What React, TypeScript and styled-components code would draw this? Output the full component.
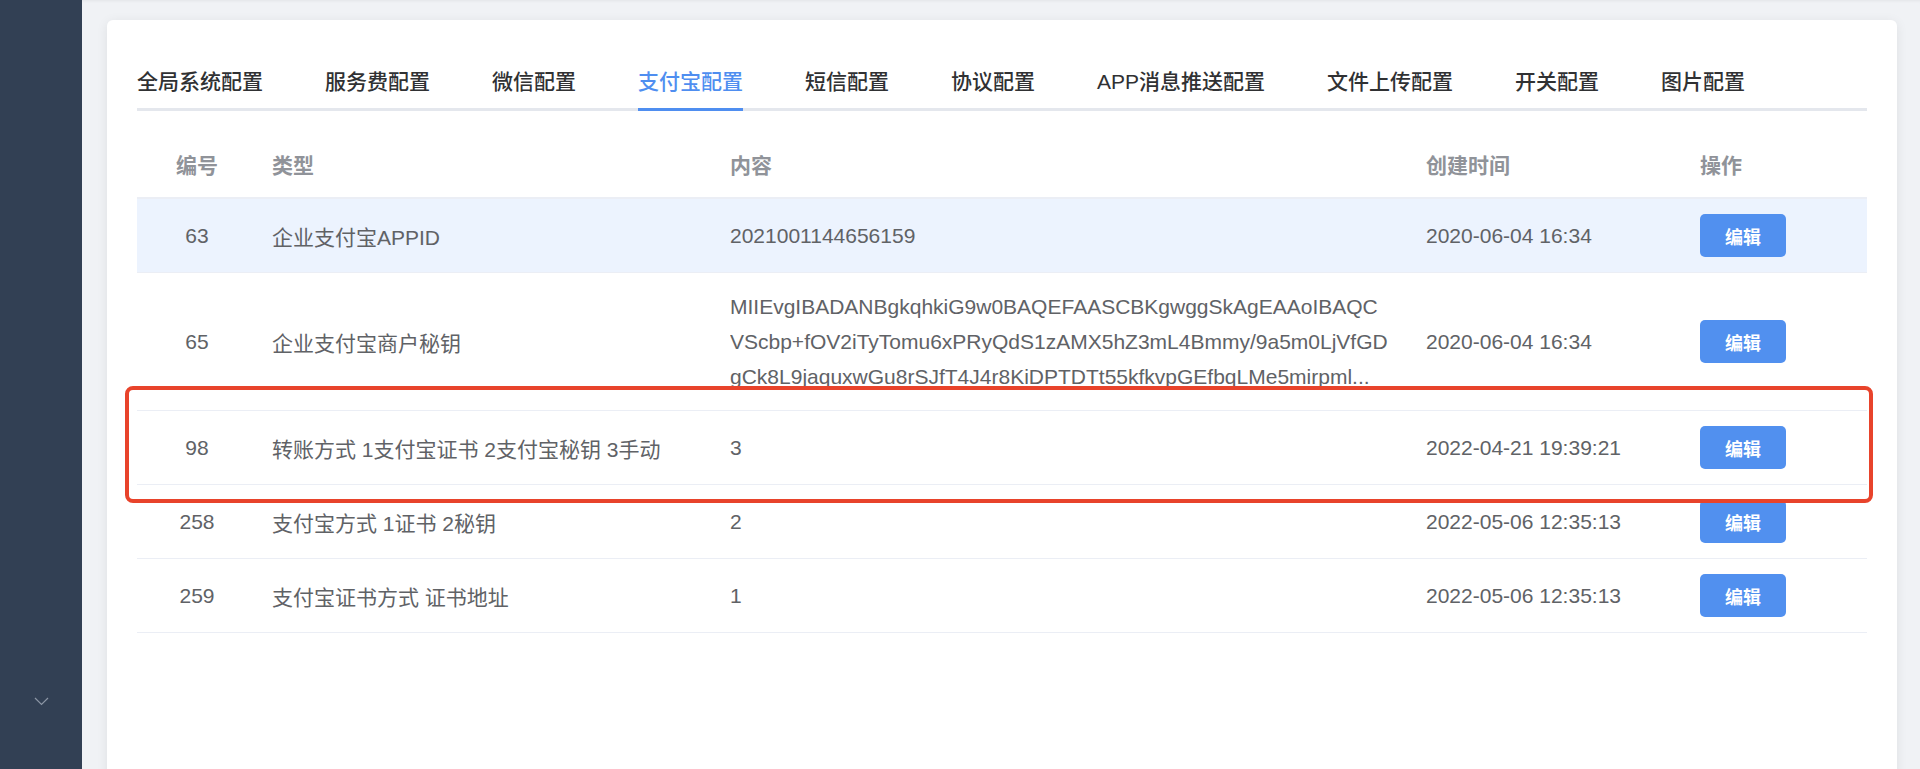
import styled, { createGlobalStyle } from "styled-components";

const GlobalStyle = createGlobalStyle`
    html, body {
        margin: 0;
        padding: 0;
        height: 100%;
        overflow: hidden;
        background: #f0f2f5;
        font-family: "Liberation Sans", "Noto Sans CJK SC", sans-serif;
    }
`

interface ConfigRow {
    id: number;
    type: string;
    content: string[];
    createdAt: string;
    marked?: boolean;
}

const tabs = ["全局系统配置", "服务费配置", "微信配置", "支付宝配置", "短信配置", "协议配置", "APP消息推送配置", "文件上传配置", "开关配置", "图片配置"];

const rows: ConfigRow[] = [
    { id: 63, type: "企业支付宝APPID", content: ["2021001144656159"], createdAt: "2020-06-04 16:34" },
    {
        id: 65, type: "企业支付宝商户秘钥", createdAt: "2020-06-04 16:34", content: [
            "MIIEvgIBADANBgkqhkiG9w0BAQEFAASCBKgwggSkAgEAAoIBAQC",
            "VScbp+fOV2iTyTomu6xPRyQdS1zAMX5hZ3mL4Bmmy/9a5m0LjVfGD",
            "gCk8L9jaquxwGu8rSJfT4J4r8KiDPTDTt55kfkvpGEfbqLMe5mirpml...",
        ]
    },
    { id: 98, type: "转账方式 1支付宝证书 2支付宝秘钥 3手动", content: ["3"], createdAt: "2022-04-21 19:39:21", marked: true },
    { id: 258, type: "支付宝方式 1证书 2秘钥", content: ["2"], createdAt: "2022-05-06 12:35:13" },
    { id: 259, type: "支付宝证书方式 证书地址", content: ["1"], createdAt: "2022-05-06 12:35:13" },
];

const Layout = styled.div`
    display: flex;
    height: 100vh;
`

const Sidebar = styled.aside`
    width: 82px;
    flex-shrink: 0;
    background: #324054;
    display: flex;
    flex-direction: column;
    justify-content: flex-end;
    align-items: center;
    padding-bottom: 63px;
    box-sizing: border-box;
`

const Main = styled.main`
    flex: 1;
    padding: 20px 23px 0 25px;
    overflow: hidden;
    box-shadow: inset 0 3px 3px -2px rgba(0, 0, 0, 0.06);
`

const Card = styled.section`
    background: #fff;
    border-radius: 6px;
    box-shadow: 0 2px 12px rgba(0, 0, 0, 0.08);
    padding: 30px;
    min-height: 900px;
`

const TabBar = styled.div`
    display: flex;
    gap: 62px;
    border-bottom: 3px solid #e4e7ed;
    margin-bottom: 24px;
`

const TabItem = styled.div<{ active: boolean }>`
    position: relative;
    height: 58px;
    padding-top: 2px;
    box-sizing: border-box;
    display: flex;
    align-items: center;
    font-size: 21px;
    font-weight: 500;
    color: ${props => props.active ? "#4f8ef0" : "#303133"};
    white-space: nowrap;

    &::after {
        content: "";
        display: ${props => props.active ? "block" : "none"};
        position: absolute;
        left: 0;
        right: 0;
        bottom: -3px;
        height: 3px;
        background: #4f8ef0;
    }
`

const Table = styled.div`
    width: 100%;
`

const Row = styled.div<{ highlighted?: boolean }>`
    position: relative;
    display: grid;
    grid-template-columns: 120px 458px 696px 274px 182px;
    border-bottom: 1px solid #ebeef5;
    background: ${props => props.highlighted ? "#ecf3fe" : "#fff"};
`

const HeaderRow = styled(Row)`
    height: 62px;
    border-bottom-width: 2px;
`

const HeadCell = styled.div<{ center?: boolean }>`
    display: flex;
    align-items: center;
    justify-content: ${props => props.center ? "center" : "flex-start"};
    padding: 0 15px 4px;
    font-size: 21px;
    font-weight: bold;
    color: #909399;
`

const Cell = styled.div<{ center?: boolean }>`
    display: flex;
    align-items: center;
    justify-content: ${props => props.center ? "center" : "flex-start"};
    min-height: 73px;
    padding: 0 15px;
    font-size: 21px;
    color: #606266;
    white-space: nowrap;
`

const ContentCell = styled(Cell)`
    flex-direction: column;
    align-items: flex-start;
    justify-content: center;
    padding-top: 16px;
    padding-bottom: 16px;
    box-sizing: border-box;
`

const ContentLine = styled.div`
    line-height: 35px;
    overflow: hidden;
    text-overflow: ellipsis;
    max-width: 100%;
`

const EditButton = styled.button`
    width: 86px;
    height: 43px;
    border: none;
    border-radius: 5px;
    background: #5190ef;
    color: #fff;
    font-family: inherit;
    font-size: 18px;
    font-weight: 600;
    cursor: pointer;
`

const Marker = styled.div`
    position: absolute;
    z-index: 2;
    top: -25px;
    bottom: -19px;
    left: -12px;
    right: -6px;
    border: 4px solid #e8432b;
    border-radius: 8px;
    pointer-events: none;
`

const ChevronDown = () => <svg width="15" height="9" viewBox="0 0 15 9" fill="none">
    <path d="M1 1l6.5 6.5L14 1" stroke="#8c96a5" strokeWidth="1.2" />
</svg>;

export default function App() {
    return <>
        <GlobalStyle />
        <Layout>
            <Sidebar>
                <ChevronDown />
            </Sidebar>
            <Main>
                <Card>
                    <TabBar>
                        {tabs.map(tab => <TabItem key={tab} active={tab === "支付宝配置"}>{tab}</TabItem>)}
                    </TabBar>
                    <Table>
                        <HeaderRow>
                            <HeadCell center>编号</HeadCell>
                            <HeadCell>类型</HeadCell>
                            <HeadCell>内容</HeadCell>
                            <HeadCell>创建时间</HeadCell>
                            <HeadCell>操作</HeadCell>
                        </HeaderRow>
                        {rows.map((row, i) => <Row key={row.id} highlighted={i === 0}>
                            <Cell center>{row.id}</Cell>
                            <Cell>{row.type}</Cell>
                            {row.content.length > 1
                                ? <ContentCell>{row.content.map(line => <ContentLine key={line}>{line}</ContentLine>)}</ContentCell>
                                : <Cell>{row.content[0]}</Cell>}
                            <Cell>{row.createdAt}</Cell>
                            <Cell><EditButton>编辑</EditButton></Cell>
                            {row.marked && <Marker />}
                        </Row>)}
                    </Table>
                </Card>
            </Main>
        </Layout>
    </>;
}
